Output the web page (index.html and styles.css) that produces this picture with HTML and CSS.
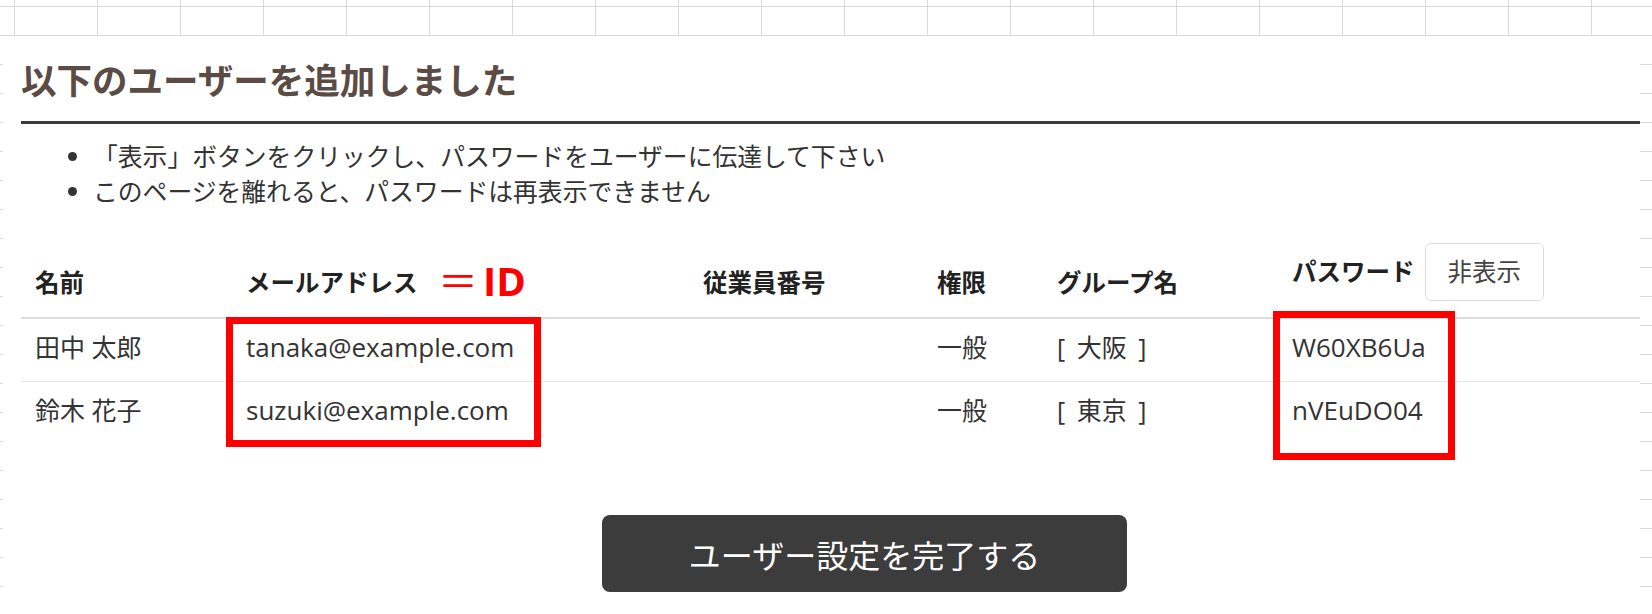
FILE: index.html
```html
<!DOCTYPE html>
<html lang="ja">
<head>
  <meta charset="UTF-8">
  <meta name="viewport" content="width=device-width, initial-scale=1.0">
  <title>ユーザー追加完了</title>
  <link rel="stylesheet" href="styles.css">
</head>
<body>
  <div class="sheet">
    <h2 class="title">以下のユーザーを追加しました</h2>
    <ul class="notes">
      <li>「表示」ボタンをクリックし、パスワードをユーザーに伝達して下さい</li>
      <li>このページを離れると、パスワードは再表示できません</li>
    </ul>

    <div class="table-wrap">
      <table class="users">
        <thead>
          <tr>
            <th class="col-name">名前</th>
            <th class="col-mail">メールアドレス</th>
            <th class="col-no">従業員番号</th>
            <th class="col-role">権限</th>
            <th class="col-group">グループ名</th>
            <th class="col-pass">パスワード<button class="btn-toggle">非表示</button></th>
          </tr>
        </thead>
        <tbody>
          <tr>
            <td>田中 太郎</td>
            <td class="latin">tanaka@example.com</td>
            <td></td>
            <td>一般</td>
            <td class="group">[ 大阪 ]</td>
            <td class="latin">W60XB6Ua</td>
          </tr>
          <tr>
            <td>鈴木 花子</td>
            <td class="latin">suzuki@example.com</td>
            <td></td>
            <td>一般</td>
            <td class="group">[ 東京 ]</td>
            <td class="latin">nVEuDO04</td>
          </tr>
        </tbody>
      </table>

      <!-- annotations -->
      <span class="mark-id"><span class="eq">＝</span>ID</span>
      <div class="mark mark-mail"></div>
      <div class="mark mark-pass"></div>
    </div>

    <div class="actions">
      <button class="btn-done">ユーザー設定を完了する</button>
    </div>
  </div>
</body>
</html>
```

FILE: styles.css
```css
html, body {
  height: 100%;
}

body {
  margin: 0;
  overflow: hidden;
  font-family: "Open Sans", "Noto Sans CJK JP", sans-serif;
  color: #333;
  background-color: #fff;
  background-image:
    linear-gradient(to bottom, #d9d9d9 1px, transparent 1px),
    linear-gradient(to right, #d9d9d9 1px, transparent 1px);
  background-size: 100% 29px, 83px 100%;
  background-position: 0 6px, 14px 0;
}

.sheet {
  margin: 36px 12px 0 3px;
  padding-left: 18px;
  height: 578px;
  background: #fff;
}

.title {
  margin: 0;
  padding: 19px 0 16px;
  font-size: 35.5px;
  line-height: 50px;
  font-weight: bold;
  color: #5b4b45;
  border-bottom: 3px solid #3a3a3a;
}

.notes {
  margin: 15px 0 0;
  padding-left: 72px;
  font-size: 24.8px;
  line-height: 35px;
  color: #333;
}

.table-wrap {
  position: relative;
  margin-top: 20px;
}

.users {
  width: 1619px;
  border-collapse: collapse;
  table-layout: fixed;
}

.users th {
  text-align: left;
  font-size: 24.5px;
  line-height: 36px;
  font-weight: bold;
  color: #222;
  padding: 14px 14px 16px;
  vertical-align: bottom;
  border-bottom: 2px solid #ddd;
  white-space: nowrap;
}

.users td {
  font-size: 25px;
  line-height: 36px;
  padding: 10px 14px 16px;
  color: #333;
}

.users td.latin {
  font-size: 26px;
}

.users td.group {
  word-spacing: 5px;
}

.users tbody tr + tr td {
  border-top: 1px solid #e6e6e6;
}

/* widths exclude the 28px horizontal padding */
.col-name { width: 183px; }
.col-mail { width: 429px; }
.col-no { width: 206px; }
.col-role { width: 92px; }
.col-group { width: 207px; }
.col-pass { width: 334px; }

.btn-toggle {
  margin-left: 10px;
  padding: 10px 22px;
  font-family: inherit;
  font-size: 24.5px;
  line-height: 36px;
  font-weight: normal;
  color: #444;
  background: #fff;
  border: 1px solid #ddd;
  border-radius: 6px;
}

.mark {
  position: absolute;
  box-sizing: border-box;
  border: 7px solid #f00;
}

.mark-mail {
  left: 205px;
  top: 88px;
  width: 315px;
  height: 130px;
}

.mark-pass {
  left: 1252px;
  top: 82px;
  width: 182px;
  height: 149px;
}

.mark-id {
  position: absolute;
  left: 417px;
  top: 32px;
  font-size: 40px;
  line-height: 40px;
  font-weight: bold;
  color: #f00;
}

.mark-id .eq {
  font-weight: normal;
  margin-right: 5px;
}

.actions {
  margin-top: 71px;
  padding-left: 581px;
}

.btn-done {
  width: 525px;
  height: 77px;
  font-family: inherit;
  font-size: 32px;
  color: #fff;
  background: #3c3c3c;
  border: none;
  border-radius: 8px;
}
```
